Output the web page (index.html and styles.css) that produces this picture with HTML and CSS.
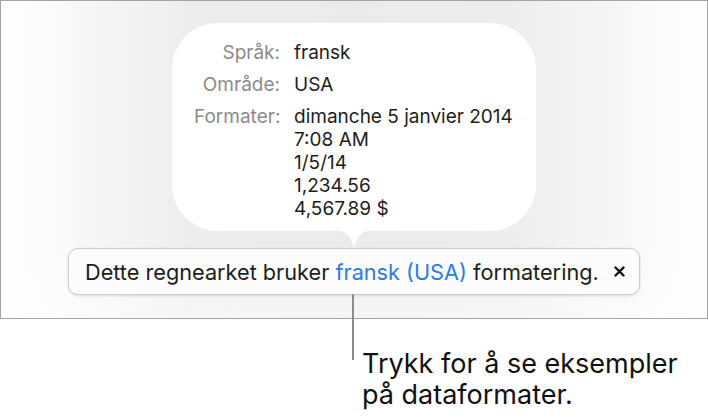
FILE: index.html
```html
<!DOCTYPE html>
<html>
  <head>
    <meta charset="UTF-8">
    <title>Formatering</title>
    <link rel="stylesheet" href="styles.css">
  </head>
  <body>
    <div class="frame">
      <div class="bubble">
        <div class="label">Språk:</div>
        <div class="value">fransk</div>
        <div class="label">Område:</div>
        <div class="value">USA</div>
        <div class="label">Formater:</div>
        <div class="value">
          dimanche 5 janvier 2014<br>
          7:08 AM<br>
          1/5/14<br>
          1,234.56<br>
          4,567.89 $
        </div>
      </div>
      <svg class="tail" width="44" height="19" viewBox="0 0 44 19">
        <path d="M0 0 C10 0 14 2 19 9 L22 18.5 L25 9 C30 2 34 0 44 0 Z" fill="#fff"/>
      </svg>
      <div class="banner">
        <span class="msg">Dette regnearket bruker <a href="javascript:;" class="lang">fransk (USA)</a> formatering.</span>
        <svg class="close" width="11" height="11" viewBox="0 0 11 11">
          <path d="M1.5 1.5 L9.5 9.5 M9.5 1.5 L1.5 9.5" stroke="#111" stroke-width="2.4" stroke-linecap="round"/>
        </svg>
      </div>
    </div>
    <p class="caption">Trykk for å se eksempler<br>på dataformater.</p>
  </body>
</html>
```

FILE: styles.css
```css
* { margin: 0; padding: 0; box-sizing: border-box; }
body { background: #fff; font-family: "Inter", "Liberation Sans", sans-serif; color: #1d1d1d; }
.frame { height: 319px; border: 1px solid #a4a4a4; display: flex; flex-direction: column; align-items: center; padding-top: 22px;
  background: linear-gradient(to bottom, rgba(255,255,255,0) 75%, rgba(255,255,255,.55) 100%),
              linear-gradient(to right, #fff 0%, #ededed 27%, #ebebeb 50%, #ededed 72%, #fff 100%); }
.bubble { width: 364px; height: 208px; background: #fff; border-radius: 46px; padding: 18px 0 0 22px;
  display: grid; grid-template-columns: 86px auto; column-gap: 14px; row-gap: 9px; align-content: start;
  font-size: 19px; line-height: 23px; }
.label { text-align: right; color: #8b8b8b; white-space: nowrap; }
.value { color: #1d1d1d; white-space: nowrap; }
.tail { display: block; margin-top: -1px; }
.banner { position: relative; width: 572px; height: 47px; margin-top: -1px; background: #fcfcfc; border: 1px solid #cdcdcd;
  border-radius: 10px; box-shadow: 0 1px 3px rgba(0,0,0,.12); display: flex; align-items: center; justify-content: space-between;
  padding: 0 14px 0 16px; font-size: 21.7px; }
.banner::after { content: ""; position: absolute; left: 283px; top: 100%; width: 2px; height: 66px; background: #8c8c8c; }
.lang { color: #2b7de0; text-decoration: none; }
.close { display: block; }
.caption { margin: 29px 0 0 362px; font-size: 27px; line-height: 31px; color: #111; }
```
